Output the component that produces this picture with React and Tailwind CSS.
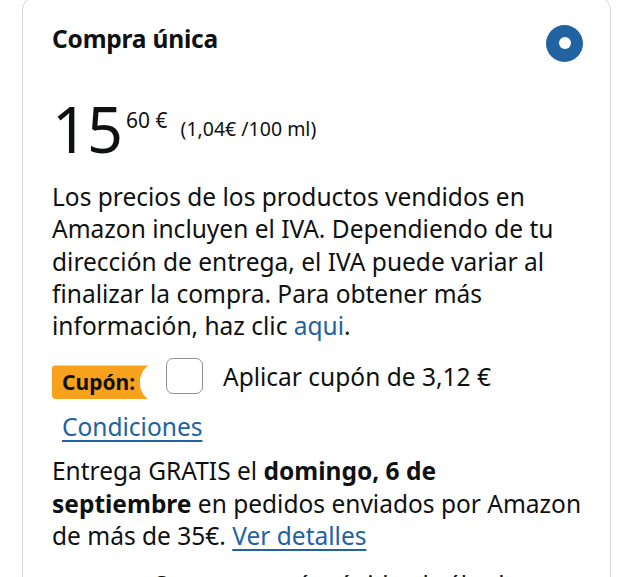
export default function App() {
  const font = { fontFamily: '"Noto Sans", "Open Sans", Arial, sans-serif' };
  return (
    <div className="w-[633px] h-[577px] overflow-hidden bg-white text-[#0f1111]" style={font}>
      <div className="ml-[22px] mt-[-4px] w-[589px] h-[620px] rounded-[14px] border border-[#d5d9d9] pl-[29px] pr-[27px] pt-[25.5px]">
        <div className="flex items-start justify-between">
          <div className="text-[24.5px] leading-[32px] font-bold tracking-[-0.2px]">Compra única</div>
          <div className="mt-[2px] w-[37px] h-[37px] rounded-full bg-[#2162a1] flex items-center justify-center">
            <div className="w-[12px] h-[12px] rounded-full bg-white" />
          </div>
        </div>
        <div className="mt-[35.5px] flex items-start">
          <span className="text-[63px] leading-[63px] tracking-[-1px]">15</span>
          <span className="ml-[4px] mt-[11px] text-[21px] leading-[24px]">60 €</span>
          <span className="ml-[13px] mt-[20px] text-[19.5px] leading-[24px]">(1,04€ /100 ml)</span>
        </div>
        <p className="mt-[21px] text-[24.5px] leading-[32.3px]">
          Los precios de los productos vendidos en Amazon incluyen el IVA. Dependiendo de tu dirección de entrega, el IVA puede variar al finalizar la compra. Para obtener más información, haz clic <span className="text-[#2162a1]">aqui</span>.
        </p>
        <div className="mt-[16px] flex items-start">
          <div className="mt-[7px] w-[96px] h-[34px] bg-[#f7a11c] rounded-l-[4px] flex items-center pl-[10px] [clip-path:polygon(0_0,100%_0,95%_15%,92%_35%,91.5%_50%,92%_65%,95%_85%,100%_100%,0_100%)]">
            <span className="text-[21px] font-bold leading-[24px] text-[#0f1111]">Cupón:</span>
          </div>
          <div className="ml-[18px] w-[37px] h-[36px] rounded-[7px] border-[1.5px] border-[#8d9096] bg-white" />
          <div className="ml-[20px] mt-[2.5px] text-[24.5px] leading-[32px]">Aplicar cupón de 3,12 €</div>
        </div>
        <div className="mt-[11.5px] ml-[10px] leading-[32px]">
          <span className="text-[24.5px] leading-[32px] text-[#2162a1] underline underline-offset-[4px] decoration-[1.5px]">Condiciones</span>
        </div>
        <p className="mt-[9px] text-[24.5px] leading-[32.6px]">
          Entrega GRATIS el <span className="font-bold">domingo, 6 de<br />septiembre</span> en pedidos enviados por Amazon de más de 35€. <span className="text-[#2162a1] underline underline-offset-[4px] decoration-[1.5px]">Ver detalles</span>
        </p>
        <p className="mt-[16px] pl-[100px] text-[24.5px] leading-[32px]">
          O entrega más rápida el sábado
        </p>
      </div>
    </div>
  );
}
